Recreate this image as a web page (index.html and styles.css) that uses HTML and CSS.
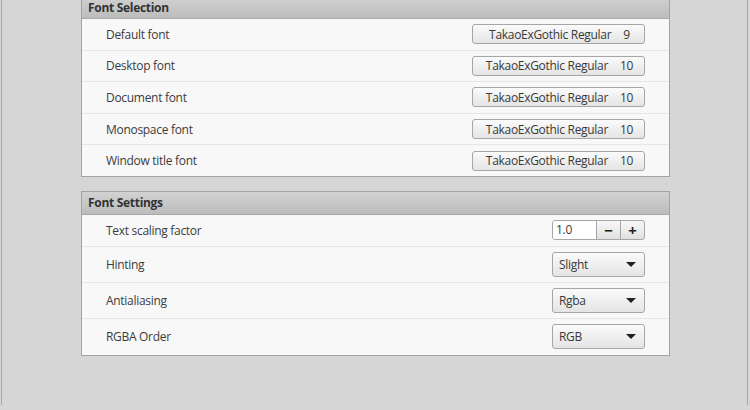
FILE: index.html
```html
<!DOCTYPE html>
<html>
<head>
<meta charset="utf-8">
<link rel="stylesheet" href="styles.css">
</head>
<body>
<div class="page">
  <div class="content">
    <section class="frame first">
      <div class="frame-head">Font Selection</div>
      <div class="row"><span class="label">Default font</span><button class="fontbtn"><span>TakaoExGothic Regular</span><span class="size">9</span></button></div>
      <div class="row"><span class="label">Desktop font</span><button class="fontbtn"><span>TakaoExGothic Regular</span><span class="size">10</span></button></div>
      <div class="row"><span class="label">Document font</span><button class="fontbtn"><span>TakaoExGothic Regular</span><span class="size">10</span></button></div>
      <div class="row"><span class="label">Monospace font</span><button class="fontbtn"><span>TakaoExGothic Regular</span><span class="size">10</span></button></div>
      <div class="row"><span class="label">Window title font</span><button class="fontbtn"><span>TakaoExGothic Regular</span><span class="size">10</span></button></div>
    </section>
    <section class="frame second">
      <div class="frame-head">Font Settings</div>
      <div class="row r1"><span class="label">Text scaling factor</span>
        <div class="spin"><span class="spin-entry">1.0</span><span class="spin-btn">&minus;</span><span class="spin-btn">+</span></div>
      </div>
      <div class="row r2"><span class="label">Hinting</span><div class="combo"><span>Slight</span><span class="arrow"></span></div></div>
      <div class="row r2"><span class="label">Antialiasing</span><div class="combo"><span>Rgba</span><span class="arrow"></span></div></div>
      <div class="row r2 last"><span class="label">RGBA Order</span><div class="combo"><span>RGB</span><span class="arrow"></span></div></div>
    </section>
  </div>
</div>
</body>
</html>
```
FILE: styles.css
```css
html, body {
  margin: 0;
  padding: 0;
  background: #d6d6d6;
  overflow: hidden;
}
body {
  width: 750px;
  height: 410px;
  font-family: "Open Sans", "Liberation Sans", sans-serif;
  font-size: 12px;
  letter-spacing: -0.3px;
  color: #3a3a3a;
}
.page {
  box-sizing: border-box;
  margin-left: 1px;
  width: 747px;
  height: 410px;
  border-left: 1px solid #a9a9a9;
  border-right: 1px solid #a9a9a9;
  background: #d6d6d6;
}
.content {
  padding-left: 79px;
  width: 589px;
}
.frame {
  background: #f8f8f8;
  border: 1px solid #a3a3a3;
  box-sizing: border-box;
  width: 589px;
}
.first {
  margin-top: -5px;
}
.first .row {
  height: 30.6px;
}
.second {
  margin-top: 14px;
  padding-bottom: 1px;
}
.second .label {
  padding-top: 1px;
}
.frame-head {
  height: 22px;
  line-height: 22px;
  padding-left: 6px;
  font-weight: bold;
  font-size: 12px;
  color: #333;
  background: linear-gradient(#d2d2d2, #bcbcbc);
  border-bottom: 1px solid #a8a8a8;
}
.first .frame-head {
  line-height: 23px;
}
.row {
  display: flex;
  align-items: center;
  justify-content: space-between;
  height: 30px;
  padding: 0 24px 0 24px;
  border-bottom: 1px solid #e6e6e6;
}
.row:last-child {
  border-bottom: none;
}
.r1 {
  height: 31px;
}
.r2 {
  height: 35px;
}
.label {
  color: #3c3c3c;
}
.fontbtn {
  box-sizing: border-box;
  width: 173px;
  height: 20px;
  display: flex;
  align-items: center;
  justify-content: center;
  gap: 12px;
  padding: 0 0 0 2px;
  font-family: inherit;
  font-size: 12px;
  letter-spacing: -0.3px;
  color: #3a3a3a;
  border: 1px solid #a6a6a6;
  border-radius: 3px;
  background: linear-gradient(#fbfbfb, #e4e4e4);
}
.spin {
  display: flex;
  box-sizing: border-box;
  width: 93px;
  height: 20px;
  border: 1px solid #a6a6a6;
  border-radius: 3px;
  background: linear-gradient(#f8f8f8, #e0e0e0);
}
.spin-entry {
  flex: 1;
  background: #fff;
  padding-left: 3px;
  line-height: 18px;
  border-right: 1px solid #a6a6a6;
  border-radius: 2px 0 0 2px;
}
.spin-btn {
  width: 23px;
  display: flex;
  align-items: center;
  justify-content: center;
  font-weight: bold;
  font-size: 15px;
  line-height: 18px;
  color: #222;
}
.spin-btn + .spin-btn {
  border-left: 1px solid #a6a6a6;
}
.combo {
  box-sizing: border-box;
  width: 93px;
  height: 25px;
  display: flex;
  align-items: center;
  justify-content: space-between;
  padding: 0 8px 0 6px;
  border: 1px solid #a6a6a6;
  border-radius: 3px;
  background: linear-gradient(#fbfbfb, #e4e4e4);
  color: #3a3a3a;
}
.arrow {
  width: 0;
  height: 0;
  border-left: 5px solid transparent;
  border-right: 5px solid transparent;
  border-top: 5px solid #222;
}
```
